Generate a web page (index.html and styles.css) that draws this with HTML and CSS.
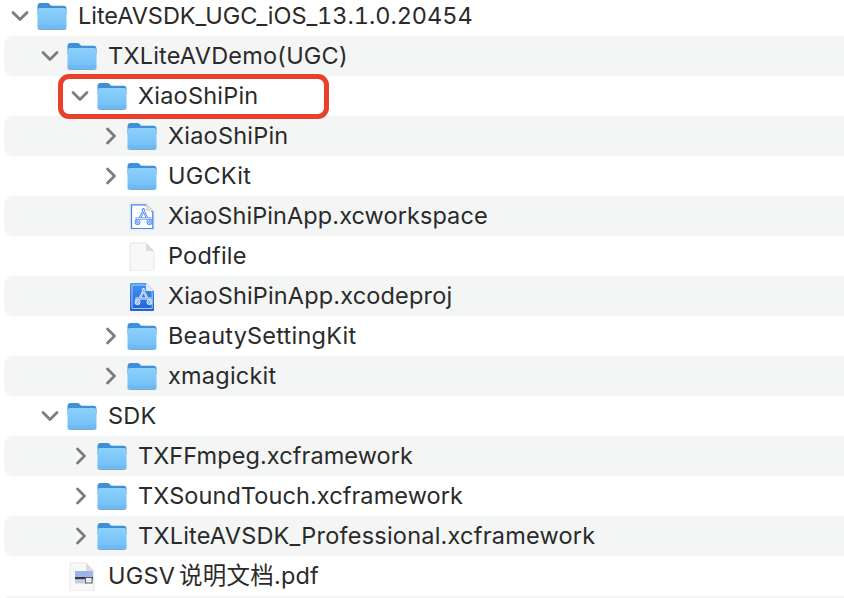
FILE: index.html
```html
<!DOCTYPE html>
<html lang="zh-CN">
<head>
<meta charset="utf-8">
<title>Finder list</title>
<link rel="stylesheet" href="styles.css">
</head>
<body>
<svg class="defs" width="0" height="0" aria-hidden="true">
  <defs>
    <linearGradient id="fb" x1="0" y1="0" x2="0" y2="1"><stop offset="0" stop-color="#8dd0fb"/><stop offset="1" stop-color="#70bdf6"/></linearGradient>
    <linearGradient id="xp" x1="0" y1="0" x2="0" y2="1"><stop offset="0" stop-color="#4494f2"/><stop offset="1" stop-color="#2262d2"/></linearGradient>
    <symbol id="folder" viewBox="0 0 30 28">
      <path d="M.5 4.500C.5 2 1.700 1 3.500 1h6.700c1.400 0 2 .6 3 1.700l1.100 1.100h12.200c1.900 0 3 1.200 3 3V12H.5z" fill="#3d8fd9"/>
      <path d="M.5 8.500C.5 7 1.500 6 3 6h24c1.500 0 2.500 1 2.500 2.500v15.800c0 2-1 3-2.800 3H3.300c-1.800 0-2.800-1-2.800-3z" fill="url(#fb)"/>
      <path d="M.5 23.800h29M.5 25.600h29" stroke="#5aa5e2" stroke-width=".6" opacity=".55"/>
      <path d="M.5 26.300c.4.800 1.300 1.200 2.800 1.200h23.400c1.500 0 2.400-.4 2.800-1.200" fill="none" stroke="#5a97cc" stroke-width=".8"/>
    </symbol>
    <symbol id="down" viewBox="0 0 18 12"><path d="M2 2.500l7 7 7-7" fill="none" stroke="#7d7d7d" stroke-width="2.800" stroke-linecap="round" stroke-linejoin="round"/></symbol>
    <symbol id="right" viewBox="0 0 12 18"><path d="M2.500 2l7 7-7 7" fill="none" stroke="#7d7d7d" stroke-width="2.800" stroke-linecap="round" stroke-linejoin="round"/></symbol>
    <g id="sheet"><path d="M3 3.200C3 2.400 3.400 2 4.200 2H19l8 8v18.800c0 .8-.4 1.200-1.200 1.200H4.200C3.400 30 3 29.600 3 28.800z" fill="#f8f8f8" stroke="#dddddd" stroke-width=".7"/></g>
    <g id="fold"><path d="M19 2v6.800c0 .8.400 1.200 1.200 1.200H27z" fill="#dcdcdc"/></g>
    <g id="tool"><path d="M17.500 7.500L11 21M15.500 7.500l6.500 13.500M8.500 17.500h16" fill="none"/><circle cx="10.500" cy="21" r="1.800" fill="none"/><circle cx="22.500" cy="21" r="1.800" fill="none"/></g>
    <symbol id="page" viewBox="0 0 30 30"><use href="#sheet"/><use href="#fold"/></symbol>
    <symbol id="workspace" viewBox="0 0 30 30">
      <use href="#sheet"/>
      <path d="M4.500 3.800H18L25.800 11V27.500H4.500z" fill="#fff" stroke="#3c7ff0" stroke-width="1.200"/>
      <use href="#fold"/>
      <use href="#tool" stroke="#3c7ff0" stroke-width="2.200"/>
      <use href="#tool" stroke="#e9f1ff" stroke-width=".8"/>
    </symbol>
    <symbol id="proj" viewBox="0 0 30 30">
      <path d="M3 3.500C3 2.500 3.500 2 4.500 2H19l8 8v18.500c0 1-.5 1.500-1.500 1.500h-21C3.500 30 3 29.500 3 28.500z" fill="url(#xp)"/>
      <path d="M5 4H18L25.200 11.200V27.500H5z" fill="none" stroke="#d5e5ff" stroke-width=".7"/>
      <path d="M19 2v6.800c0 .8.400 1.200 1.200 1.200H27z" fill="#e4e9f2"/>
      <use href="#tool" stroke="#e9f1ff" stroke-width="2.200"/>
      <use href="#tool" stroke="#6fa4f0" stroke-width=".7"/>
    </symbol>
    <symbol id="pdf" viewBox="0 0 30 30">
      <use href="#sheet"/><use href="#fold"/>
      <rect x="8" y="10" width="18" height="6" fill="#9db4ea"/>
      <rect x="8" y="16" width="18" height="2.500" fill="#2e3a4c"/>
      <rect x="8" y="18.500" width="18" height="4" fill="#c9ced6"/>
      <rect x="18.500" y="16.500" width="6.500" height="5.500" fill="#ececec" stroke="#444c58" stroke-width=".8"/>
    </symbol>
  </defs>
</svg>
<main class="list">
  <div class="row row-first lv0"><svg class="chev-d"><use href="#down"/></svg><svg class="folder"><use href="#folder"/></svg><span class="name tnum">LiteAVSDK_UGC_iOS_13.1.0.20454</span></div>
  <div class="row alt lv1"><svg class="chev-d"><use href="#down"/></svg><svg class="folder"><use href="#folder"/></svg><span class="name">TXLiteAVDemo(UGC)</span></div>
  <div class="row lv2 top"><svg class="chev-d"><use href="#down"/></svg><svg class="folder"><use href="#folder"/></svg><span class="name">XiaoShiPin</span><div class="mark"></div></div>
  <div class="row alt lv3"><svg class="chev-r"><use href="#right"/></svg><svg class="folder"><use href="#folder"/></svg><span class="name">XiaoShiPin</span></div>
  <div class="row lv3"><svg class="chev-r"><use href="#right"/></svg><svg class="folder"><use href="#folder"/></svg><span class="name">UGCKit</span></div>
  <div class="row alt lv3"><span class="nochev"></span><svg class="doc"><use href="#workspace"/></svg><span class="name snug">XiaoShiPinApp.xcworkspace</span></div>
  <div class="row lv3"><span class="nochev"></span><svg class="doc"><use href="#page"/></svg><span class="name">Podfile</span></div>
  <div class="row alt lv3"><span class="nochev"></span><svg class="doc"><use href="#proj"/></svg><span class="name proj-name">XiaoShiPinApp.xcodeproj</span></div>
  <div class="row lv3"><svg class="chev-r"><use href="#right"/></svg><svg class="folder"><use href="#folder"/></svg><span class="name">BeautySettingKit</span></div>
  <div class="row alt lv3"><svg class="chev-r"><use href="#right"/></svg><svg class="folder"><use href="#folder"/></svg><span class="name">xmagickit</span></div>
  <div class="row lv1"><svg class="chev-d"><use href="#down"/></svg><svg class="folder"><use href="#folder"/></svg><span class="name">SDK</span></div>
  <div class="row alt lv2"><svg class="chev-r"><use href="#right"/></svg><svg class="folder"><use href="#folder"/></svg><span class="name snug">TXFFmpeg.xcframework</span></div>
  <div class="row lv2"><svg class="chev-r"><use href="#right"/></svg><svg class="folder"><use href="#folder"/></svg><span class="name snug">TXSoundTouch.xcframework</span></div>
  <div class="row alt lv2"><svg class="chev-r"><use href="#right"/></svg><svg class="folder"><use href="#folder"/></svg><span class="name">TXLiteAVSDK_Professional.xcframework</span></div>
  <div class="row lv1"><span class="nochev"></span><svg class="doc"><use href="#pdf"/></svg><span class="name tight">UGSV 说明文档.pdf</span></div>
  <div class="row alt tail"></div>
</main>
</body>
</html>
```
FILE: styles.css
```css
* { box-sizing: border-box; }
html, body { margin: 0; height: 598px; overflow: hidden; background: #fff; }
.defs { display: block; height: 0; }
.list { display: flex; flex-direction: column; padding-left: 4px; }
.row { position: relative; display: flex; align-items: center; flex: 0 0 40px; height: 40px; border-radius: 9px 0 0 9px; }
.row-first { flex-basis: 36px; height: 36px; padding-bottom: 4px; }
.top { z-index: 1; }
.alt { background: #f4f5f5; }
.tail { flex-basis: 10px; height: 10px; }
.lv0 { padding-left: 7px; }
.lv1 { padding-left: 37px; }
.lv2 { padding-left: 67px; }
.lv3 { padding-left: 101px; }
.chev-d { flex: none; width: 18px; height: 12px; margin-right: 8px; }
.chev-r { flex: none; width: 12px; height: 18px; margin-right: 10px; }
.lv2 .chev-r { margin-left: 4px; }
.nochev { flex: none; width: 22px; height: 18px; }
.lv1 .nochev { width: 26px; }
.folder { flex: none; width: 30px; height: 28px; margin-top: -1px; }
.doc { flex: none; width: 30px; height: 30px; }
.name { flex: none; margin-left: 11px; font: 23.5px/30px Inter, "Noto Sans CJK SC", sans-serif; letter-spacing: .22px; color: #2a2a2a; white-space: nowrap; }
.tnum { font-feature-settings: "tnum"; letter-spacing: -.05px; }
.snug { letter-spacing: .08px; }
.proj-name { letter-spacing: .16px; }
.tight { word-spacing: -3px; }
.mark { position: absolute; left: 54px; top: -2px; width: 271px; height: 45px; border: 5px solid #e8402a; border-radius: 11px; }
```
